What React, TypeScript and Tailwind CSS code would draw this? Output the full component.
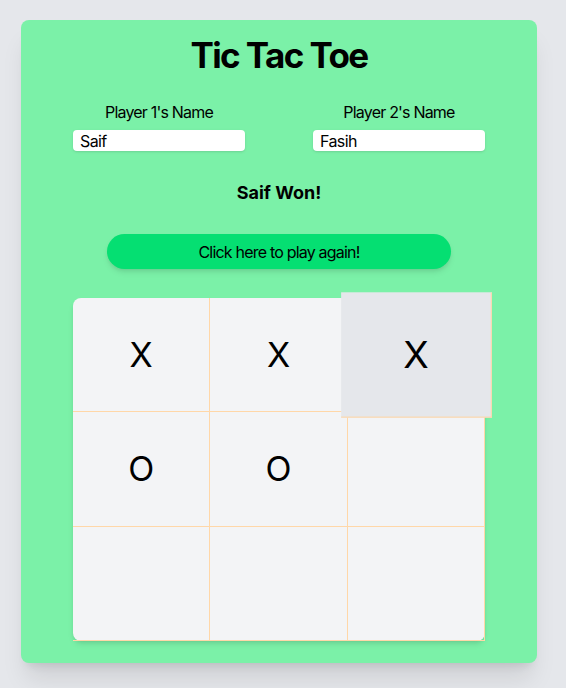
import React from "react";

const cells = ["X", "X", "X", "O", "O", "", "", "", ""];

export default function App() {
  return (
    <div
      className="min-h-screen bg-gray-200 pt-[20px] pb-[25px] text-black"
      style={{ fontFamily: "Inter, 'Noto Sans', sans-serif" }}
    >
      <div className="ml-[21px] w-[516px] h-[643px] rounded-lg bg-green-300 shadow-xl pt-[15px] px-[18px] flex flex-col items-center">
        <h1 className="text-[35px] font-bold leading-10 tracking-[-1.6px]">Tic Tac Toe</h1>
        <div className="mt-[25px] grid grid-cols-2 w-full">
          <div className="flex flex-col items-center">
            <label className="text-base leading-6 tracking-[-0.8px]">Player 1's Name</label>
            <input
              readOnly
              value="Saif"
              className="mt-[6px] w-[172px] h-[21px] rounded bg-white px-[7px] text-base tracking-[-0.6px] shadow-sm outline-none"
            />
          </div>
          <div className="flex flex-col items-center">
            <label className="text-base leading-6 tracking-[-0.8px]">Player 2's Name</label>
            <input
              readOnly
              value="Fasih"
              className="mt-[6px] w-[172px] h-[21px] rounded bg-white px-[7px] text-base tracking-[-0.6px] shadow-sm outline-none"
            />
          </div>
        </div>
        <div className="mt-[28px] text-lg font-bold leading-7">Saif Won!</div>
        <button className="mt-[27px] w-[344px] h-[35px] rounded-full bg-green-400 shadow-md text-base tracking-[-0.8px]">
          Click here to play again!
        </button>
        <div className="mt-[29px] w-[412px] h-[343px] grid grid-cols-3 grid-rows-3 rounded-lg bg-gray-100 shadow-md">
          {cells.map((c, i) => (
            <div
              key={i}
              className={
                i === 2
                  ? "flex items-center justify-center border-r border-b border-orange-200 bg-gray-200 scale-110 text-[34px]"
                  : "flex items-center justify-center border-r border-b border-orange-200 text-[34px]"
              }
            >
              {c}
            </div>
          ))}
        </div>
      </div>
    </div>
  );
}
